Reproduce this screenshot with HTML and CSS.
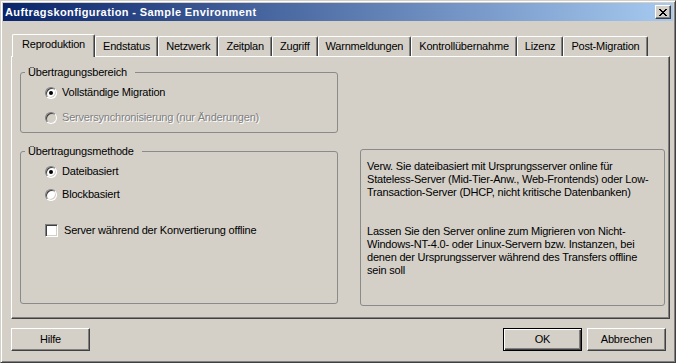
FILE: index.html
```html
<!DOCTYPE html>
<html lang="de">
<head>
  <meta charset="UTF-8" />
  <title>Auftragskonfiguration - Sample Environment</title>
  <link rel="stylesheet" href="styles.css">
</head>
<body>

  <div class="window">
    <div class="titlebar">
      <span class="title">Auftragskonfiguration - Sample Environment</span>
      <button class="close-btn" title="Schließen">
        <svg width="8" height="7" viewBox="0 0 8 7" shape-rendering="crispEdges">
          <path d="M0 0h2v1h1v1h2v-1h1v-1h2v1h-1v1h-1v1h-1v1h1v1h1v1h1v1h-2v-1h-1v-1h-2v1h-1v1h-2v-1h1v-1h1v-1h1v-1h-1v-1h-1v-1h-1z" fill="#000"/>
        </svg>
      </button>
    </div>

    <div class="dialog">
      <!-- Tab row -->
      <div class="tabs">
        <div class="tab active">Reproduktion</div>
        <div class="tab">Endstatus</div>
        <div class="tab">Netzwerk</div>
        <div class="tab">Zeitplan</div>
        <div class="tab">Zugriff</div>
        <div class="tab">Warnmeldungen</div>
        <div class="tab">Kontrollübernahme</div>
        <div class="tab">Lizenz</div>
        <div class="tab">Post-Migration</div>
      </div>

      <div class="panel">
        <fieldset class="group group-scope">
          <legend>Übertragungsbereich</legend>
          <label class="option"><span class="radio checked"></span>Vollständige Migration</label>
          <label class="option disabled"><span class="radio"></span>Serversynchronisierung (nur Änderungen)</label>
        </fieldset>

        <div class="row">
          <fieldset class="group group-method">
            <legend>Übertragungsmethode</legend>
            <label class="option"><span class="radio checked"></span>Dateibasiert</label>
            <label class="option"><span class="radio"></span>Blockbasiert</label>
            <label class="option check"><span class="checkbox"></span>Server während der Konvertierung offline</label>
          </fieldset>

          <div class="group info">
            <p>Verw. Sie dateibasiert mit Ursprungsserver online für<br>Stateless-Server (Mid-Tier-Anw., Web-Frontends) oder Low-<br>Transaction-Server (DHCP, nicht kritische Datenbanken)</p>
            <p>Lassen Sie den Server online zum Migrieren von Nicht-<br>Windows-NT-4.0- oder Linux-Servern bzw. Instanzen, bei<br>denen der Ursprungsserver während des Transfers offline<br>sein soll</p>
          </div>
        </div>
      </div>

      <div class="footer">
        <button class="btn">Hilfe</button>
        <div class="footer-right">
          <button class="btn default">OK</button>
          <button class="btn">Abbrechen</button>
        </div>
      </div>
    </div>
  </div>

</body>
</html>
```

FILE: styles.css
```css
:root {
  --face: #d4d0c8;
  --light: #fff;
  --shadow: #808080;
  --dark: #404040;
}

* {
  box-sizing: border-box;
}

body {
  margin: 0;
  background: var(--face);
  font-family: "Liberation Sans", Arial, sans-serif;
  font-size: 11px;
  letter-spacing: -0.2px;
  line-height: 13px;
  color: #000;
}

/* Window frame */
.window {
  width: 676px;
  height: 363px;
  display: flex;
  flex-direction: column;
  background: var(--face);
  border: 1px solid;
  border-color: var(--face) var(--dark) var(--dark) var(--face);
  box-shadow: inset 1px 1px var(--light), inset -1px -1px var(--shadow);
  padding: 2px;
}

.titlebar {
  height: 18px;
  display: flex;
  align-items: center;
  padding: 0 2px;
  background: linear-gradient(to right, #0a246a, #a6caf0);
  color: #fff;
  font-weight: bold;
  letter-spacing: 0.4px;
}

.close-btn {
  margin-left: auto;
  width: 16px;
  height: 14px;
  padding: 0;
  display: flex;
  align-items: center;
  justify-content: center;
  background: var(--face);
  border: 1px solid;
  border-color: var(--light) var(--dark) var(--dark) var(--light);
  box-shadow: inset -1px -1px var(--shadow);
}

.dialog {
  flex: 1;
  display: flex;
  flex-direction: column;
  padding: 13px 3px 0 8px;
}

/* Tabs */
.tabs {
  display: flex;
  align-items: flex-end;
  padding-left: 1px;
}

.tab {
  height: 20px;
  padding: 3px 7px 0;
  white-space: nowrap;
  border-top: 1px solid var(--light);
  border-left: 1px solid var(--light);
  border-right: 1px solid var(--dark);
  border-radius: 2px 2px 0 0;
  box-shadow: inset -1px 0 var(--shadow);
}

.tab.active {
  height: 23px;
  padding: 3px 9px 0;
  margin-bottom: -1px;
  position: relative;
  z-index: 1;
  background: var(--face);
}

.panel {
  height: 263px;
  padding: 9px 0 0 8px;
  border: 1px solid;
  border-color: var(--light) var(--dark) var(--dark) var(--light);
  box-shadow: inset -1px -1px var(--shadow);
}

/* Group boxes */
.group {
  margin: 0;
  border: 1px solid #8a8a8a;
  border-radius: 3px;
}

fieldset.group {
  width: 318px;
  padding: 0 0 0 24px;
}

legend {
  margin-left: -20px;
  padding: 0 8px 0 3px;
}

.group-scope {
  height: 67px;
}

.row {
  display: flex;
  align-items: flex-start;
  gap: 22px;
  margin-top: 12px;
}

.group-method {
  height: 159px;
}

.option {
  display: flex;
  align-items: center;
  gap: 5px;
  height: 13px;
  margin-top: 7px;
}

.group-scope .option + .option {
  margin-top: 12px;
}

.group-method .option + .option {
  margin-top: 10px;
}

.group-method .option.check {
  margin-top: 23px;
  gap: 6px;
}

.option.disabled {
  color: var(--shadow);
  text-shadow: 1px 1px var(--light);
}

.radio {
  width: 12px;
  height: 12px;
  flex: none;
  display: flex;
  align-items: center;
  justify-content: center;
  border-radius: 50%;
  background: #fff;
  border: 1px solid;
  border-color: var(--shadow) var(--light) var(--light) var(--shadow);
  box-shadow: inset 1px 1px var(--dark), inset -1px -1px var(--face);
}

.radio.checked::after {
  content: "";
  width: 4px;
  height: 4px;
  border-radius: 50%;
  background: #000;
}

.disabled .radio {
  background: var(--face);
}

.checkbox {
  width: 13px;
  height: 13px;
  flex: none;
  background: #fff;
  border: 1px solid;
  border-color: var(--shadow) var(--light) var(--light) var(--shadow);
  box-shadow: inset 1px 1px var(--dark), inset -1px -1px var(--face);
}

.info {
  width: 305px;
  height: 157px;
  margin-top: 4px;
  padding: 10px 6px;
  white-space: nowrap;
}

.info p {
  margin: 0 0 26px;
}

/* Footer buttons */
.footer {
  display: flex;
  justify-content: space-between;
  margin-top: 9px;
  padding-right: 4px;
}

.footer-right {
  display: flex;
  gap: 5px;
}

.btn {
  width: 79px;
  height: 23px;
  padding: 0;
  font: inherit;
  letter-spacing: inherit;
  color: #000;
  background: var(--face);
  border: 1px solid;
  border-color: var(--light) var(--dark) var(--dark) var(--light);
  box-shadow: inset -1px -1px var(--shadow);
}

.btn.default {
  border: 1px solid #000;
  box-shadow: inset 1px 1px var(--light), inset -1px -1px var(--dark), inset -2px -2px var(--shadow);
}
```
